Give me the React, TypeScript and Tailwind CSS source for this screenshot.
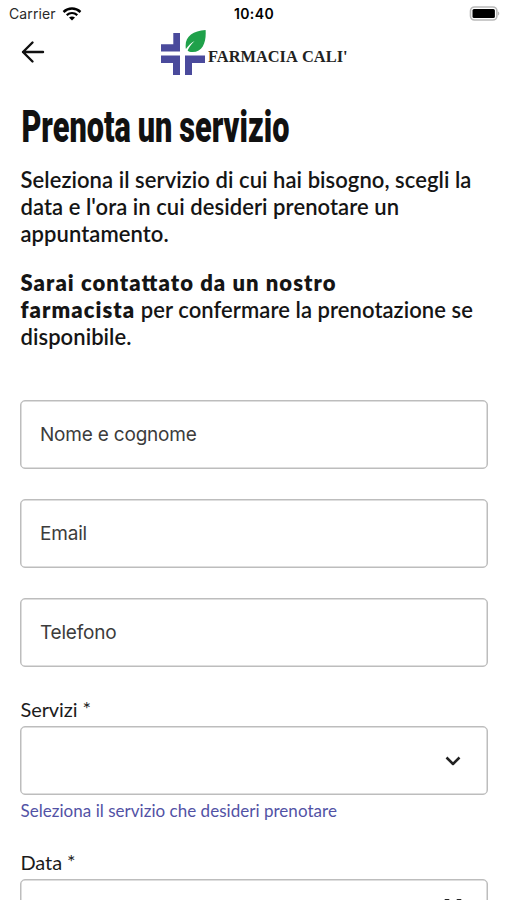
import type { ReactNode } from "react"

interface TextFieldProps {
  id: string
  label: string
}

interface SelectFieldProps {
  id: string
  label: string
  hint?: string
  icon?: "chevron" | "calendar"
}

function StatusBar() {
  return (
    <div className="grid h-7 grid-cols-3 items-center pl-[9px] pr-[7px] font-['Inter',sans-serif] text-black">
      <div className="flex items-center gap-[6px]">
        <span className="text-[14px] leading-none tracking-[0.1px] text-[#2a2a2a]">Carrier</span>
        <svg width="20" height="14" viewBox="0 0 20 14" fill="none" stroke="currentColor" aria-hidden="true">
          <path d="M1.500 5C6.500.4 13.500.4 18.500 5" strokeWidth="2.400" />
          <path d="M4.700 8.200c3.200-2.800 7.400-2.800 10.600 0" strokeWidth="2.200" />
          <path d="m10 13.600-3-3c1.700-1.500 4.300-1.500 6 0z" fill="currentColor" stroke="none" />
        </svg>
      </div>
      <span className="-ml-px text-center text-[14px] font-semibold leading-none tracking-[0.4px]">10:40</span>
      <svg className="-mt-px justify-self-end" width="31" height="15" viewBox="0 0 31 15" aria-hidden="true">
        <rect x="1.500" y="1" width="26.400" height="13" rx="4" fill="#fff" stroke="#b9b9b9" strokeWidth="1.600" />
        <rect x="3.500" y="3" width="22.400" height="9" rx="1.500" fill="#000" />
        <path d="M29.200 5.500c1.400.8 1.400 3.200 0 4z" fill="#aaa" />
      </svg>
    </div>
  )
}

function Logo() {
  return (
    <div className="flex items-center gap-[2px]">
      <svg width="46" height="46" viewBox="0 0 46 46" aria-hidden="true">
        <g fill="#4a4a9c">
          <path d="M13.300 3H20v18.500H1v-7.300h12.300z" />
          <path d="M1 25.500h19V45h-7V33H1z" />
          <path d="M25 25.500h20V33H32v12h-7z" />
        </g>
        <path d="M45.600 0c.8 11.200-2.400 22-13 22-2.400 0-4-.7-5-1.600 1.800-3.600 4.200-6.700 7-9.300-3.600 1.900-6.400 4.700-8.700 8C24 7 32 1.200 45.600 0z" fill="#1fa14a" />
      </svg>
      <span className="mt-[9px] font-['Liberation_Serif',serif] text-[16.400px] font-bold leading-none text-[#222] [word-spacing:1px]">FARMACIA CALI'</span>
    </div>
  )
}

function Header() {
  return (
    <header className="flex h-[52px] items-center px-[21px]">
      <button type="button" aria-label="Indietro" className="mt-[-4px] text-[#111]">
        <svg width="24" height="24" viewBox="0 0 24 24" fill="none" stroke="currentColor" strokeWidth="2.400" strokeLinecap="round" strokeLinejoin="round">
          <path d="M11.500 2.500 2 12l9.500 9.500M2 12h20" />
        </svg>
      </button>
      <div className="ml-[115px] mt-[-3px]">
        <Logo />
      </div>
    </header>
  )
}

function FieldBox({ children }: { children: ReactNode }) {
  return (
    <div className="mr-[-0.500px] flex h-[69px] items-center rounded-[5px] border border-[#bdbdbd] bg-white shadow-[inset_0_0_0_0.500px_#bdbdbd]">
      {children}
    </div>
  )
}

function TextField({ id, label }: TextFieldProps) {
  return (
    <FieldBox>
      <input
        id={id}
        placeholder={label}
        aria-label={label}
        className="h-full w-full bg-transparent px-[19px] font-['Inter',sans-serif] text-[19px] tracking-[-0.200px] text-[#3c3c3c] outline-none placeholder:text-[#3c3c3c]"
      />
    </FieldBox>
  )
}

function ChevronIcon() {
  return (
    <svg width="16" height="10" viewBox="0 0 16 10" fill="none" stroke="#222" strokeWidth="2.500" strokeLinejoin="round" aria-hidden="true">
      <path d="m1.500 1.500 6.500 6.500 6.500-6.500" />
    </svg>
  )
}

function CalendarIcon() {
  return (
    <svg className="-mr-1" width="24" height="30" viewBox="0 0 24 30" fill="none" stroke="#222" strokeWidth="2" strokeLinejoin="round" aria-hidden="true">
      <path d="M4.500 4.500V1h3v3.500M16.500 4.500V1h3v3.500" />
      <rect x="1" y="4.500" width="22" height="24" rx="2" />
      <path d="M1 11h22" />
    </svg>
  )
}

function SelectField({ id, label, hint, icon = "chevron" }: SelectFieldProps) {
  return (
    <div>
      <label htmlFor={id} className="block h-[30px] pl-[0.500px] text-[20px] leading-[26px] tracking-[-0.100px] text-[#1c1c1c]">
        {label} <span className="relative -top-px">*</span>
      </label>
      <FieldBox>
        <button id={id} type="button" aria-label={label} className="flex h-full w-full items-center justify-end pr-[26px]">
          {icon === "calendar" ? <CalendarIcon /> : <ChevronIcon />}
        </button>
      </FieldBox>
      {hint && <p className="mt-1 pl-[0.500px] text-[17px] leading-6 tracking-[0.030px] text-[#5252a5]">{hint}</p>}
    </div>
  )
}

export default function App() {
  return (
    <div className="h-[900px] w-[507px] overflow-hidden bg-white font-['Lato',sans-serif]">
      <StatusBar />
      <Header />
      <main className="px-5">
        <h1 className="mt-[20px] h-[54px] origin-left scale-x-[0.697] whitespace-nowrap pl-[2px] font-['Roboto',sans-serif] text-[44px] font-black leading-[54px] text-[#111] [word-spacing:-1px]">
          Prenota un servizio
        </h1>
        <div className="mt-3 pl-[0.500px] text-[22px] font-semibold leading-[27px] tracking-[0.060px] text-[#151515] [font-feature-settings:'liga']">
          <p>
            Seleziona il servizio di cui hai bisogno, scegli la
            <br />
            data e l'ora in cui desideri prenotare un
            <br />
            appuntamento.
          </p>
          <p className="mt-[22px]">
            <strong className="font-extrabold tracking-[1.060px]">
              Sarai contattato da un nostro
              <br />
              farmacista
            </strong>{" "}
            per confermare la prenotazione se
            <br />
            disponibile.
          </p>
        </div>
        <form className="mt-[50px]">
          <div className="flex flex-col gap-[30px]">
            <TextField id="name" label="Nome e cognome" />
            <TextField id="email" label="Email" />
            <TextField id="phone" label="Telefono" />
          </div>
          <div className="mt-[29px] flex flex-col gap-[26px]">
            <SelectField id="service" label="Servizi" hint="Seleziona il servizio che desideri prenotare" />
            <SelectField id="date" label="Data" icon="calendar" />
          </div>
        </form>
      </main>
    </div>
  )
}
